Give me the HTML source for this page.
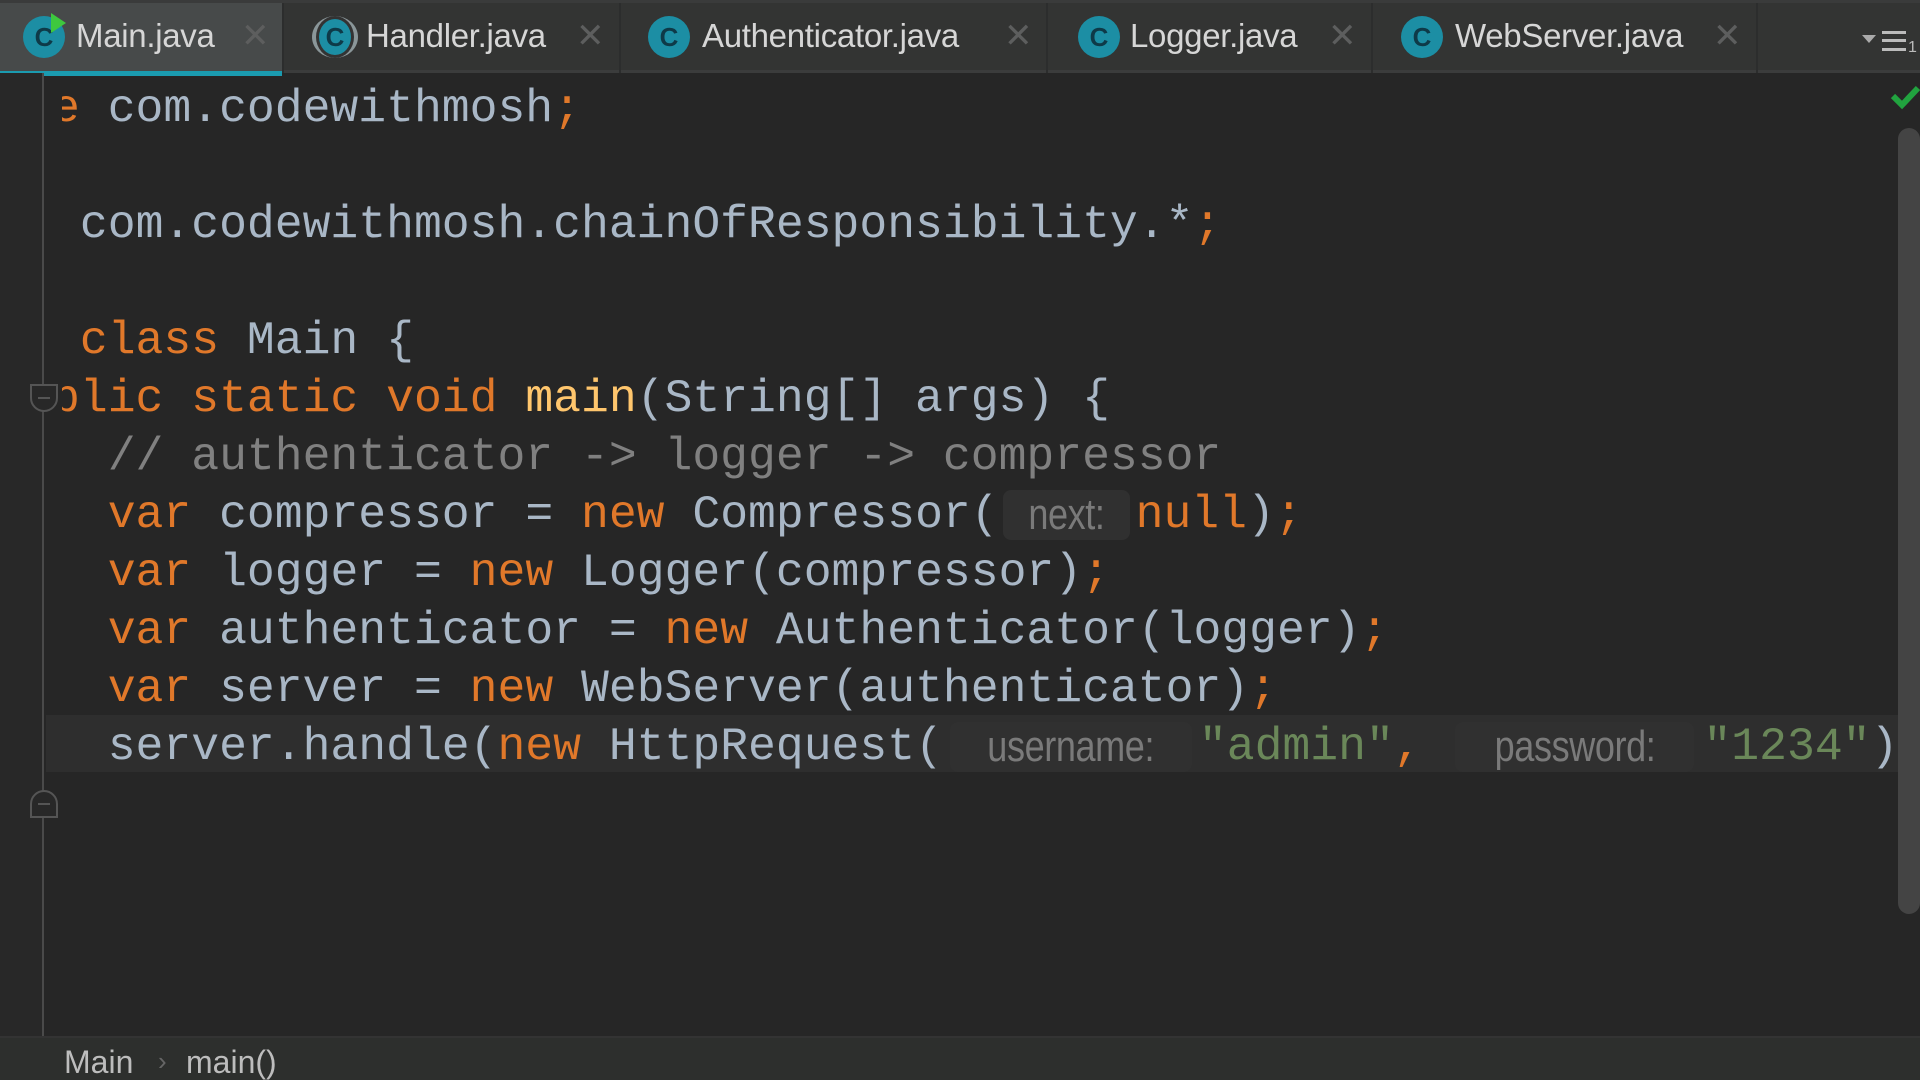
<!DOCTYPE html>
<html><head><meta charset="utf-8">
<style>
*{margin:0;padding:0;box-sizing:border-box}
html,body{width:1920px;height:1080px;overflow:hidden;background:#262626}
body{position:relative;font-family:"Liberation Sans",sans-serif}
.tabs{position:absolute;left:0;top:0;width:1920px;height:73px;background:#333433;border-bottom:3px solid #3b3c3c;border-top:3px solid #3a3b3b}
.tab{position:absolute;top:0;height:70px;border-right:2px solid #2c2d2d}
.tab .ic{position:absolute;top:13px;width:42px;height:42px;border-radius:50%;background:#1c8ea4;color:#0e3a48;font-size:26px;font-weight:bold;text-align:center;line-height:42px}
.tab .t{position:absolute;top:14px;font-size:33px;color:#d6d6d6;white-space:nowrap;letter-spacing:-0.3px}
.tab .x{position:absolute;top:13px;font-size:34px;color:#5d5e5e}
.active{background:#474a4a}
.active::after{content:"";position:absolute;left:0;bottom:-3px;width:100%;height:5px;background:#1b9bb0}
.gutter{position:absolute;left:0;top:73px;width:44px;height:963px;background:#282828;border-right:2px solid #4a4a4a}
.editor{position:absolute;left:62px;top:76px;width:1836px;height:960px;overflow:hidden}
.cur{position:absolute;left:46px;top:715px;width:1852px;height:57px;background:#2e2e2e}
.code{position:absolute;left:-177px;font-family:"Liberation Mono",monospace;font-size:46.4px;line-height:58px;color:#a9b7c6;white-space:pre}
.k{color:#e0782a}.f{color:#ffc66d}.c{color:#808080}.s{color:#6a8759}
.h{display:inline-block;font-family:"Liberation Sans",sans-serif;font-size:44px;color:#7a7a7a;background:#303030;border-radius:8px;vertical-align:top;margin-top:4px;height:50px;line-height:50px;text-align:center;overflow:hidden}
.h span{display:inline-block;transform:scaleX(0.82);letter-spacing:-0.5px}
.bottom{position:absolute;left:0;top:1036px;width:1920px;height:44px;background:#2d2f2d;border-top:2px solid #333}
.fold{position:absolute;left:30px;width:28px;height:28px;border:2px solid #555;background:#282828}
.fold::after{content:"";position:absolute;left:6px;top:11px;width:12px;height:2px;background:#555}
</style></head><body>
<div class="tabs">
 <div class="tab active" style="left:0;width:284px"><div class="ic" style="left:23px">C</div><div style="position:absolute;left:51px;top:10px;width:0;height:0;border-left:15px solid #3ec83e;border-top:10px solid transparent;border-bottom:10px solid transparent"></div><div class="t" style="left:76px">Main.java</div><div class="x" style="left:241px">✕</div></div>
 <div class="tab" style="left:284px;width:337px"><div style="position:absolute;left:28px;top:13px;width:46px;height:42px;border-radius:50%;background:#8a9699"></div><div class="ic" style="left:32px;width:38px;border:3px solid #333;line-height:36px">C</div><div class="t" style="left:82px">Handler.java</div><div class="x" style="left:292px">✕</div></div>
 <div class="tab" style="left:621px;width:427px"><div class="ic" style="left:27px">C</div><div class="t" style="left:81px">Authenticator.java</div><div class="x" style="left:383px">✕</div></div>
 <div class="tab" style="left:1048px;width:325px"><div class="ic" style="left:30px">C</div><div class="t" style="left:82px">Logger.java</div><div class="x" style="left:280px">✕</div></div>
 <div class="tab" style="left:1373px;width:385px"><div class="ic" style="left:28px">C</div><div class="t" style="left:82px">WebServer.java</div><div class="x" style="left:340px">✕</div></div>
 <div style="position:absolute;left:1862px;top:32px;width:0;height:0;border-left:7px solid transparent;border-right:7px solid transparent;border-top:8px solid #aaa"></div>
 <div style="position:absolute;left:1882px;top:28px;width:24px;height:20px;border-top:3px solid #bbb;border-bottom:3px solid #bbb"><div style="margin-top:5px;height:3px;background:#bbb"></div></div>
 <div style="position:absolute;left:1908px;top:36px;font-size:16px;color:#bbb">1</div>
</div>
<div class="gutter"></div>
<div class="cur"></div>
<div class="fold" style="top:384px;border-radius:0 0 14px 14px"></div>
<div class="fold" style="top:790px;border-radius:14px 14px 0 0"></div>
<div class="editor">
 <div class="code" style="top:4px"><span class="k">package</span> com.codewithmosh<span class="k">;</span></div>
 <div class="code" style="top:120px"><span class="k">import</span> com.codewithmosh.chainOfResponsibility.*<span class="k">;</span></div>
 <div class="code" style="top:236px"><span class="k">public class</span> Main {</div>
 <div class="code" style="top:294px">    <span class="k">public static void</span> <span class="f">main</span>(String[] args) {</div>
 <div class="code" style="top:352px">        <span class="c">// authenticator -&gt; logger -&gt; compressor</span></div>
 <div class="code" style="top:410px">        <span class="k">var</span> compressor = <span class="k">new</span> Compressor(<span class="h" style="width:127px;margin-left:4px;margin-right:6px"><span>next:</span></span><span class="k">null</span>)<span class="k">;</span></div>
 <div class="code" style="top:468px">        <span class="k">var</span> logger = <span class="k">new</span> Logger(compressor)<span class="k">;</span></div>
 <div class="code" style="top:526px">        <span class="k">var</span> authenticator = <span class="k">new</span> Authenticator(logger)<span class="k">;</span></div>
 <div class="code" style="top:584px">        <span class="k">var</span> server = <span class="k">new</span> WebServer(authenticator)<span class="k">;</span></div>
 <div class="code" style="top:642px">        server.handle(<span class="k">new</span> HttpRequest(<span class="h" style="width:242px;margin-left:7px;margin-right:7px"><span>username:</span></span><span class="s">"admin"</span><span class="k">,</span> <span class="h" style="width:239px;margin-left:6px;margin-right:9px"><span>password:</span></span><span class="s">"1234"</span>))<span class="k">;</span></div>
</div>
<svg style="position:absolute;left:1890px;top:84px" width="30" height="26" viewBox="0 0 30 26"><path d="M3 12 L12 21 L28 4" stroke="#21a33f" stroke-width="6" fill="none"/></svg>
<div style="position:absolute;left:1898px;top:128px;width:22px;height:786px;border-radius:11px;background:#444"></div>
<div class="bottom">
 <div style="position:absolute;left:64px;top:6px;font-size:32px;color:#bdbdbd">Main</div>
 <div style="position:absolute;left:158px;top:8px;font-size:26px;color:#666">›</div>
 <div style="position:absolute;left:186px;top:6px;font-size:32px;color:#bdbdbd">main()</div>
</div>
</body></html>
